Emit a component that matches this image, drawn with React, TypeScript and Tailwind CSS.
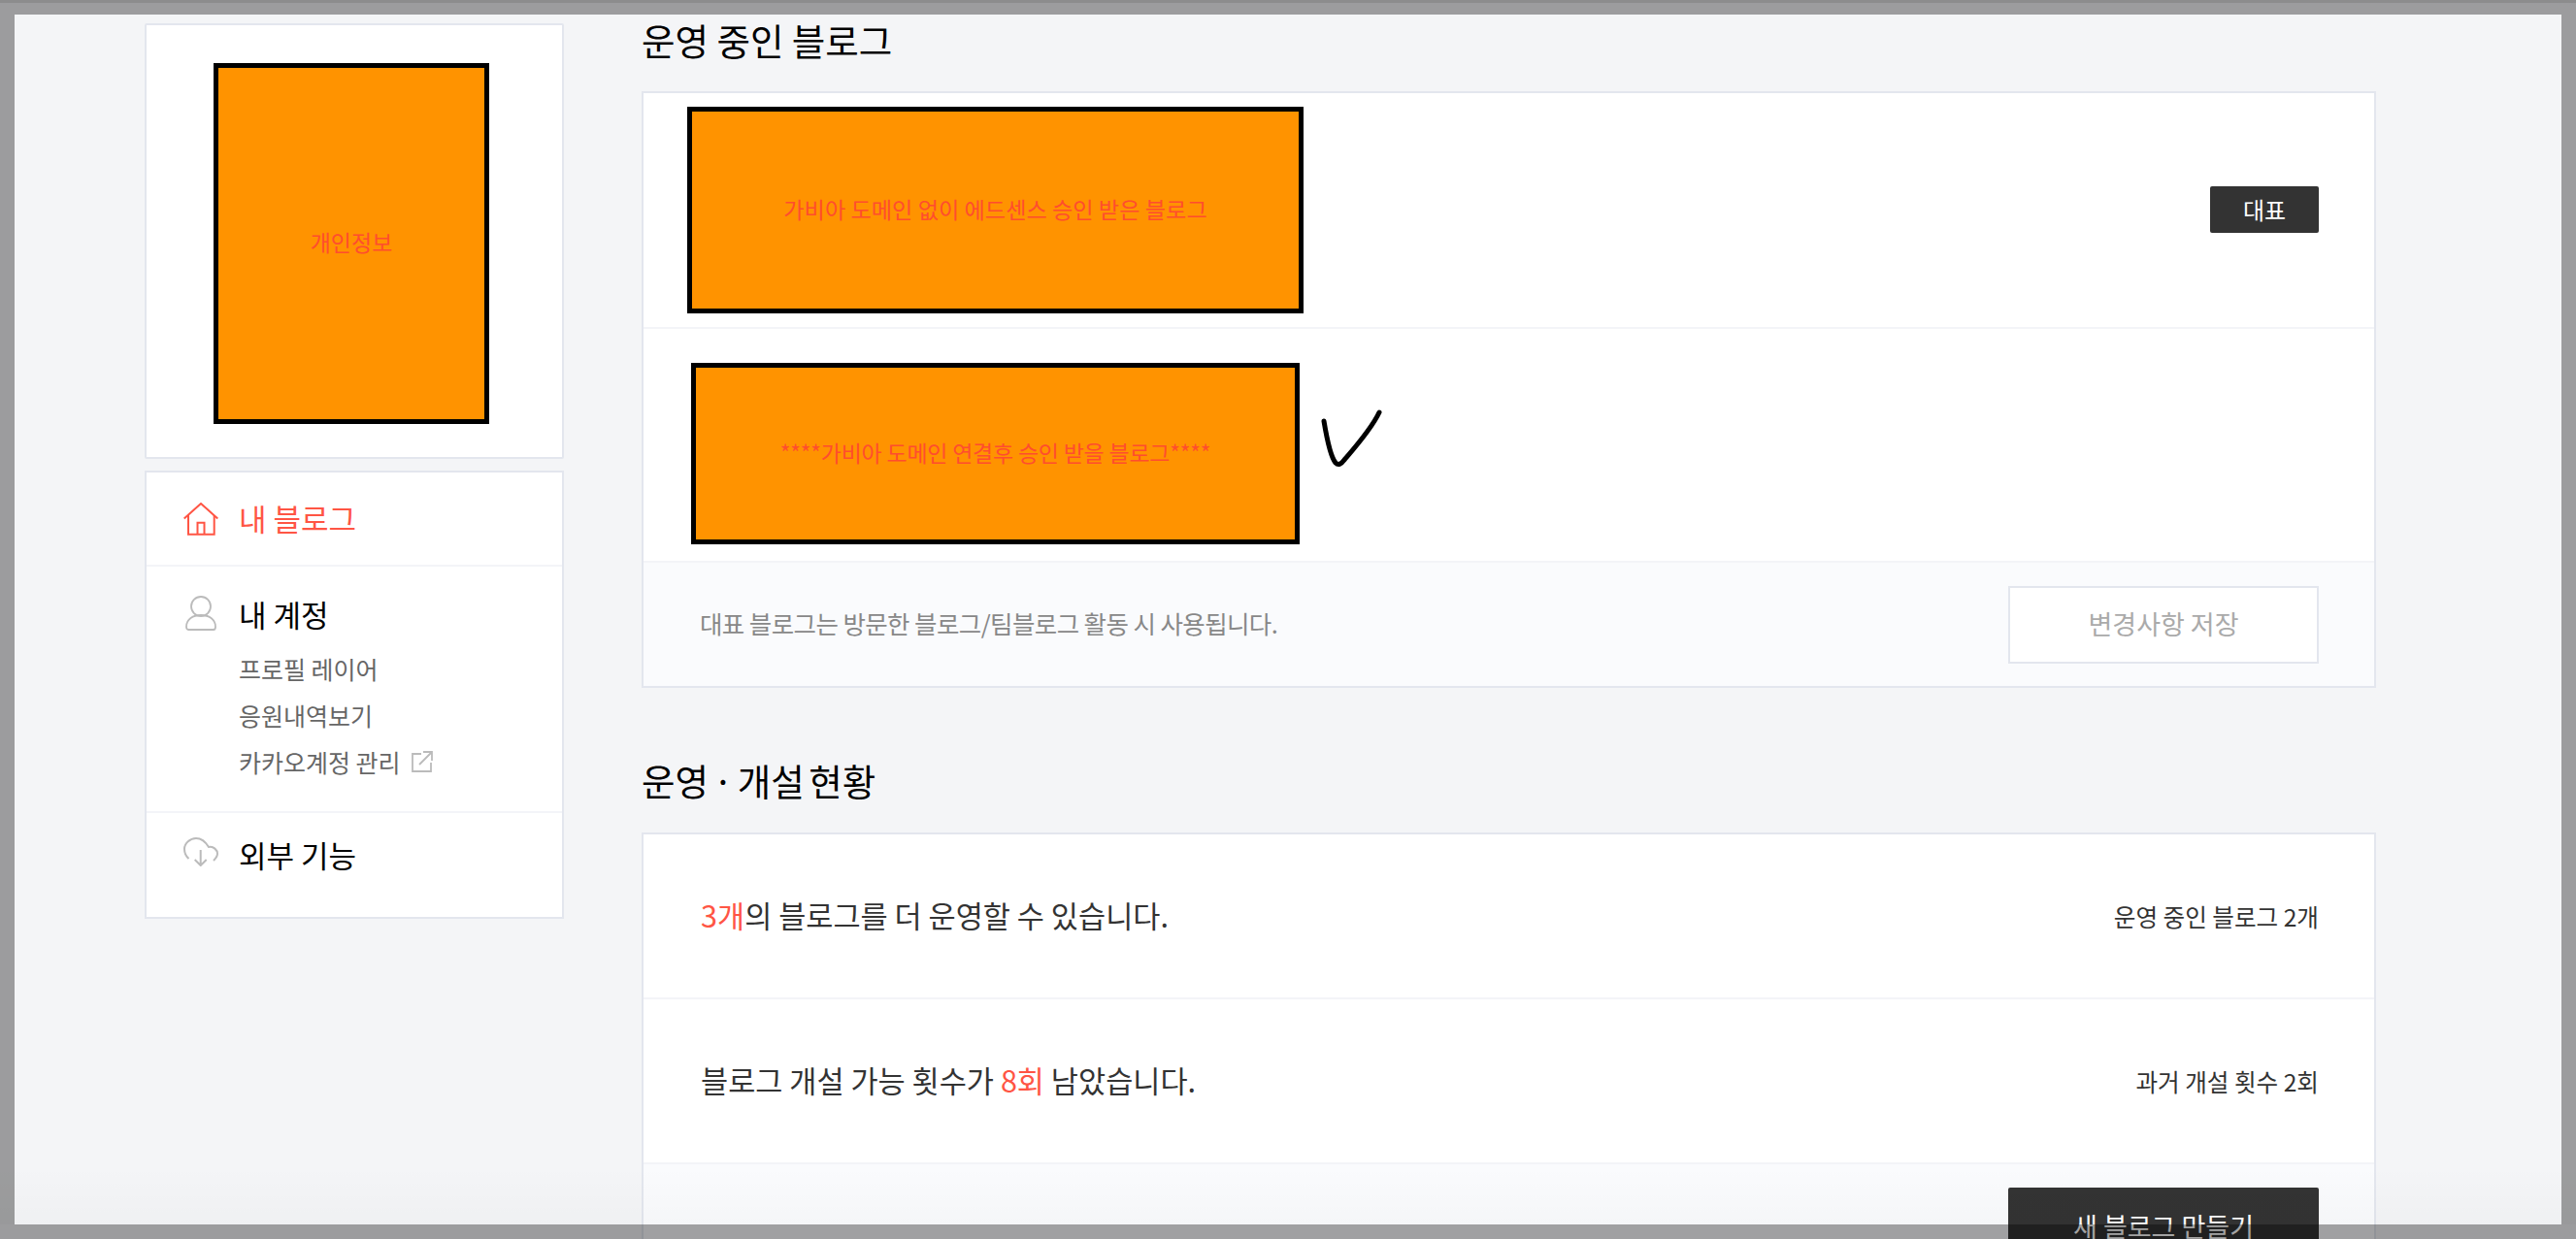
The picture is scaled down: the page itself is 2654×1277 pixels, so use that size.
const font = { fontFamily: '"Noto Sans CJK KR", "Noto Sans", sans-serif' };

function HomeIcon() {
  return (
    <svg width="36" height="34" viewBox="0 0 36 34" fill="none" stroke="#ff5544" strokeWidth="2">
      <path d="M0.7 16.5 L18 1 L35.3 16.5" />
      <path d="M5 13 V32.7 H31.7 V13" />
      <path d="M14.5 32.7 V20.7 H21.5 V32.7" />
    </svg>
  );
}

function UserIcon() {
  return (
    <svg width="32" height="36" viewBox="0 0 32 36" fill="none" stroke="#bbbbbb" strokeWidth="1.8">
      <circle cx="16" cy="11" r="10" />
      <path d="M1 32 C1 24 8 20 16 20 C24 20 31 24 31 32 C31 34 30 35 29 35 H3 C2 35 1 34 1 32 Z" />
    </svg>
  );
}

function CloudIcon() {
  return (
    <svg width="36" height="30" viewBox="0 0 36 30" fill="none" stroke="#bbbbbb" strokeWidth="2">
      <path d="M5.5 22 C2 19 1 15 1 12 C1 6 7 1 13 1 C19 1 23 5 26 10 C31 9 35 13 35 17 C35 20 33 22 31 24" />
      <path d="M17.7 13 V29 M11.7 23 L17.7 29 L23.7 23" />
    </svg>
  );
}

function ExternalIcon() {
  return (
    <svg width="22" height="22" viewBox="0 0 22 22" fill="none" stroke="#bbbbbb" strokeWidth="1.8">
      <path d="M10 3 H1 V21 H20 V12" />
      <path d="M8 14 L20.5 1.5 M12 1 H21 V10" />
    </svg>
  );
}

function Placeholder({ label, className }: { label: string; className: string }) {
  return (
    <div className={`flex items-center justify-center border-[5px] border-black bg-[#ff9300] text-[#ff4d2e] ${className}`}>
      {label}
    </div>
  );
}

export default function App() {
  return (
    <div className="relative h-[1277px] overflow-hidden bg-[#f4f5f7]" style={font}>
      <div className="flex gap-[80px] pl-[149px]">
        {/* sidebar */}
        <aside className="w-[432px] shrink-0 pt-[24px]">
          <div className="flex h-[449px] justify-center rounded-[2px] border-2 border-[#e3e6ee] bg-white pt-[39px]">
            <Placeholder label="개인정보" className="ml-[-6px] h-[372px] w-[284px] pb-[4px] text-[23px]" />
          </div>
          <nav className="mt-[12px] h-[462px] border-2 border-[#e3e6ee] bg-white">
            <div className="flex h-[97px] items-center border-b-2 border-[#f3f4f8] pl-[38px]">
              <HomeIcon />
              <span className="mb-[2px] ml-[21px] text-[31px] leading-none text-[#ff5544]">내 블로그</span>
            </div>
            <div className="h-[254px] border-b-2 border-[#f3f4f8] pt-[29px]">
              <div className="flex h-[38px] items-center pl-[40px]">
                <UserIcon />
                <span className="ml-[23px] text-[31px] leading-none text-black">내 계정</span>
              </div>
              <ul className="mt-[14px] pl-[95px] text-[25px] leading-[48px] text-[#666666]">
                <li>프로필 레이어</li>
                <li>응원내역보기</li>
                <li className="flex items-center gap-[11px]">
                  카카오계정 관리
                  <ExternalIcon />
                </li>
              </ul>
            </div>
            <div className="flex items-start pl-[38px] pt-[25px]">
              <CloudIcon />
              <span className="ml-[21px] mt-[-2px] text-[31px] leading-[40px] text-black">외부 기능</span>
            </div>
          </nav>
        </aside>

        {/* main */}
        <main className="w-[1787px] shrink-0">
          <h2 className="h-[94px] pt-[16px] text-[37.5px] font-normal leading-[50px] text-black">운영 중인 블로그</h2>
          <section className="border-2 border-[#e3e6ee] bg-white">
            <div className="flex h-[243px] items-center justify-between border-b-2 border-[#f3f4f8] pl-[45px] pr-[57px]">
              <Placeholder label="가비아 도메인 없이 에드센스 승인 받은 블로그" className="h-[213px] w-[635px] pb-[2px] text-[23.2px]" />
              <span className="mb-[2px] flex h-[48px] w-[112px] items-center justify-center rounded-[2px] bg-[#333333] text-[24px] text-white">대표</span>
            </div>
            <div className="flex h-[239px] items-start pl-[49px] pt-[35px]">
              <Placeholder label="****가비아 도메인 연결후 승인 받을 블로그****" className="h-[187px] w-[627px] pb-[2px] text-[23px] tracking-[-0.23px]" />
              <svg className="ml-[22px] mt-[48px]" width="63" height="60" viewBox="0 0 63 60" fill="none" stroke="#000000" strokeWidth="5" strokeLinecap="round">
                <path d="M3 12 C5 24 9 48 15 55 C18 58 21 56 24 52 C36 38 52 20 60 3" />
              </svg>
            </div>
            <div className="flex h-[129px] items-center justify-between border-t-2 border-[#f3f4f8] bg-[#fafbfd] pl-[58px] pr-[57px]">
              <p className="mb-[2px] text-[25.5px] tracking-[-0.6px] text-[#888888]">대표 블로그는 방문한 블로그/팀블로그 활동 시 사용됩니다.</p>
              <button className="h-[80px] w-[320px] border-2 border-[#e3e6ee] bg-white text-[27px] text-[#aaaaaa]">변경사항 저장</button>
            </div>
          </section>

          <h2 className="mt-[70px] h-[79px] text-[37.5px] font-normal leading-[50px] text-black [word-spacing:-4px]">운영 · 개설 현황</h2>
          <section className="border-2 border-[#e3e6ee] bg-white">
            <div className="flex h-[170px] items-center justify-between border-b-2 border-[#f3f4f8] pl-[59px] pr-[57px]">
              <p className="text-[30.6px] text-[#333333]">
                <span className="text-[#ff5544]">3개</span>의 블로그를 더 운영할 수 있습니다.
              </p>
              <span className="text-[24.6px] text-[#333333]">운영 중인 블로그 2개</span>
            </div>
            <div className="flex h-[170px] items-center justify-between border-b-2 border-[#f3f4f8] pl-[59px] pr-[57px]">
              <p className="text-[30.6px] text-[#333333]">
                블로그 개설 가능 횟수가 <span className="text-[#ff5544]">8회</span> 남았습니다.
              </p>
              <span className="text-[24.6px] text-[#333333]">과거 개설 횟수 2회</span>
            </div>
            <div className="flex h-[128px] items-center justify-end bg-[#fafbfd] pr-[57px]">
              <button className="h-[80px] w-[320px] rounded-[2px] bg-[#333333] text-[27px] text-white">새 블로그 만들기</button>
            </div>
          </section>
        </main>
      </div>

      {/* dimmed frame lying over the page */}
      <div className="pointer-events-none absolute inset-x-0 bottom-[15px] h-[60px] bg-gradient-to-b from-transparent to-black/[0.02]" />
      <div className="pointer-events-none absolute inset-0 border-[15px] border-black/36" />
      <div className="pointer-events-none absolute inset-x-0 top-0 h-[3px] bg-black/10" />
    </div>
  );
}
